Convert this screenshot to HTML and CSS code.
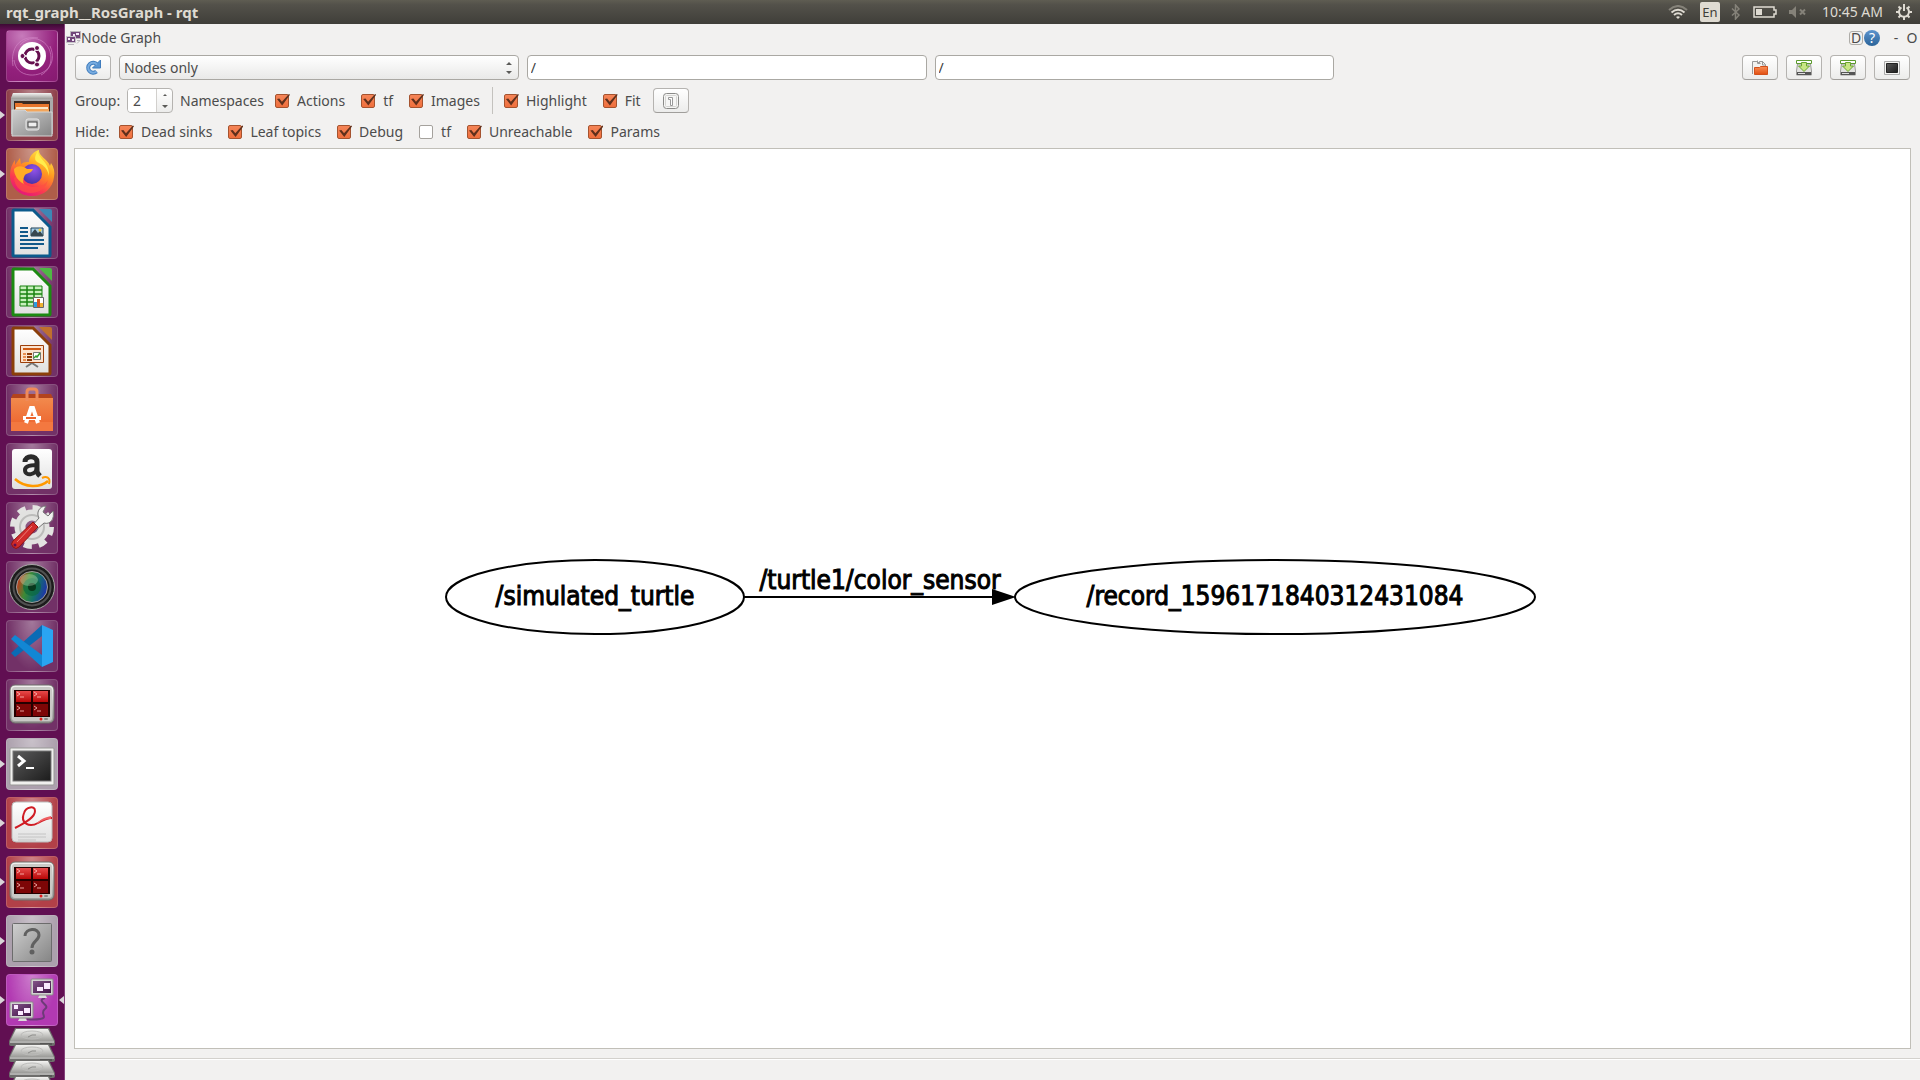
FILE: index.html
```html
<!DOCTYPE html>
<html lang="en">
<head>
<meta charset="utf-8">
<title>rqt_graph__RosGraph - rqt</title>
<link rel="stylesheet" href="styles.css">
</head>
<body>
<svg class="defs" aria-hidden="true">
  <defs>
    <linearGradient id="metal" x1="0" y1="0" x2="0" y2="1"><stop offset="0" stop-color="#f4f4f2"/><stop offset="1" stop-color="#9b9b98"/></linearGradient>
    <linearGradient id="grey" x1="0" y1="0" x2="1" y2="1"><stop offset="0" stop-color="#cfcfcf"/><stop offset="1" stop-color="#858585"/></linearGradient>
    <linearGradient id="paper" x1="0" y1="0" x2="0" y2="1"><stop offset="0" stop-color="#ffffff"/><stop offset="1" stop-color="#e0e0e0"/></linearGradient>
    <linearGradient id="fire" x1="0.8" y1="0" x2="0.3" y2="1"><stop offset="0" stop-color="#fff04a"/><stop offset="0.4" stop-color="#ff9a1f"/><stop offset="0.75" stop-color="#fb3a50"/><stop offset="1" stop-color="#e3157c"/></linearGradient>
    <radialGradient id="globe" cx="0.6" cy="0.3" r="0.8"><stop offset="0" stop-color="#9152e8"/><stop offset="1" stop-color="#3e2fa0"/></radialGradient>
    <linearGradient id="bag" x1="0" y1="0" x2="0" y2="1"><stop offset="0" stop-color="#f28a4d"/><stop offset="1" stop-color="#ec5f2a"/></linearGradient>
    <linearGradient id="dark" x1="0" y1="0" x2="1" y2="1"><stop offset="0" stop-color="#5b5b5b"/><stop offset="1" stop-color="#1c1c1c"/></linearGradient>
    <linearGradient id="redpane" x1="0" y1="0" x2="0" y2="1"><stop offset="0" stop-color="#e84a4a"/><stop offset="1" stop-color="#b80707"/></linearGradient>
    <linearGradient id="lens" x1="0" y1="0.3" x2="1" y2="0.6"><stop offset="0" stop-color="#d2321c"/><stop offset="0.35" stop-color="#3c8a35"/><stop offset="0.65" stop-color="#14706a"/><stop offset="1" stop-color="#1f2fb0"/></linearGradient>
    <linearGradient id="purplepane" x1="0" y1="0" x2="1" y2="1"><stop offset="0" stop-color="#84558a"/><stop offset="1" stop-color="#3f1245"/></linearGradient>
    <linearGradient id="orange" x1="0" y1="0" x2="0" y2="1"><stop offset="0" stop-color="#f99058"/><stop offset="1" stop-color="#e14e10"/></linearGradient>
    <symbol id="grid-term" viewBox="0 0 52 52">
      <rect x="4" y="6" width="44" height="38" rx="5" fill="url(#metal)" stroke="#6d6d69"/>
      <rect x="6" y="8" width="40" height="34" rx="3" fill="#c9c9c5"/>
      <rect x="8" y="11" width="36" height="27" fill="#240000"/>
      <path fill="url(#redpane)" d="M10 12h15v11H10zM27 12h15v11H27z"/>
      <path fill="#7d0606" d="M10 25h15v12H10zM27 25h15v12H27z"/>
      <path fill="none" stroke="#ffc4bf" stroke-opacity=".8" d="M11 13l3 2-3 2M14 18h4M28 13l3 2-3 2M31 18h4M11 27l3 2-3 2M14 32h4M28 27l3 2-3 2M31 32h4"/>
      <circle cx="35" cy="40" r="1.500" fill="#e31b1b"/><rect x="38" y="39" width="4" height="2" rx="1" fill="#898985"/>
    </symbol>
    <symbol id="disk" viewBox="0 0 46 18">
      <path d="M6 0h34l6 13v3q0 2-2 2H2q-2 0-2-2v-3z" fill="#6e6e6c"/>
      <path d="M7 1h32l6 12H1z" fill="url(#metal)"/>
      <ellipse cx="23" cy="7" rx="11" ry="4" fill="none" stroke="#bcbcba"/>
      <path d="M19 9l4-2h4" fill="none" stroke="#8c8c8a"/>
      <path d="M1 14h44" stroke="#f1f1ef"/><path d="M31 16h12" stroke="#3d3d3c"/>
    </symbol>
    <symbol id="save" viewBox="0 0 16 16">
      <path d="M1.500 4h13l1 7v4H.5v-4z" fill="#e2e2e0" stroke="#9b9b99"/>
      <path d="M1 12h14v3H1z" fill="#555"/><path d="M2 13.500h7" stroke="#ddd"/>
      <path d="M.5.500h15v3H.5z" fill="#fff" stroke="#5b9a2d"/>
      <path d="M5.500 2.500h5V6h3L8 11.500 2.500 6h3z" fill="#c8e684" stroke="#6aa52e"/>
    </symbol>
    <symbol id="screens" viewBox="0 0 52 52">
      <path d="M39 24c-10 3 6 7 0 11s4 9-5 10q-6 1-13-0" fill="none" stroke="#6d3a78" stroke-width="2"/>
      <path d="M32 24l2-4h5l2 4zM12 47l2-4h5l2 4z" fill="#dcdcda"/>
      <rect x="25" y="5" width="22" height="16" rx="1" fill="#d2d2d0" stroke="#8b8b89"/><rect x="27" y="7" width="18" height="12" fill="url(#purplepane)"/>
      <rect x="4" y="28" width="23" height="16" rx="1" fill="#d2d2d0" stroke="#8b8b89"/><rect x="6" y="30" width="19" height="12" fill="url(#purplepane)"/>
      <path d="M31 13h6v4h-6zM38 9h6v6h-6zM8 31h4v4H8zM12 37h5v4h-5zM18 34h6v5h-6z" fill="#fbeaff"/>
    </symbol>
  </defs>
</svg>

<header class="panel">
  <h1 class="panel-title">rqt_graph__RosGraph - rqt</h1>
  <div class="indicators">
    <svg class="ind-wifi" viewBox="0 0 20 14" aria-hidden="true"><g fill="none" stroke-width="2"><path d="M1 5Q10-3 19 5" stroke="#858279"/><path d="M3.500 7.500Q10 2 16.500 7.500M6 10q4-3.500 8 0" stroke="#dfdbd2"/></g><path d="M8 12q2-1.500 4 0l-2 2z" fill="#dfdbd2"/></svg>
    <span class="keyboard">En</span>
    <svg class="ind-bt" viewBox="0 0 10 16" aria-hidden="true"><path d="M1 4.500l7 6.500-3.500 4V1L8 5l-7 6.500" fill="none" stroke="#858279" stroke-width="1.500"/></svg>
    <svg class="ind-battery" viewBox="0 0 24 12" aria-hidden="true"><path d="M1 1h20v3h2v4h-2v3H1z" fill="none" stroke="#dfdbd2" stroke-width="1.500"/><path d="M3 3h6v6H3z" fill="#dfdbd2"/></svg>
    <svg class="ind-volume" viewBox="0 0 18 12" aria-hidden="true"><path d="M0 4h3l4-4v12L3 8H0z" fill="#858279"/><path d="M11 3.500l5 5m0-5l-5 5" stroke="#858279" stroke-width="2"/></svg>
    <time class="clock">10:45 AM</time>
    <svg class="ind-gear" viewBox="0 0 16 16" aria-hidden="true"><path d="M8 0v7" stroke="#dfdbd2" stroke-width="2"/><path d="M5.500 3.500a5 5 0 1 0 5 0" fill="none" stroke="#dfdbd2" stroke-width="2"/><path d="M2.500 2.500l2 2M13.500 2.500l-2 2M0 8h3M13 8h3M2.500 13.500l2-2M13.500 13.500l-2-2M8 13v3" stroke="#dfdbd2" stroke-width="2"/></svg>
  </div>
</header>

<div class="desktop">
  <nav class="launcher" aria-label="Launcher">
    <button class="tile tile-dash" aria-label="Dash"><svg viewBox="0 0 52 52"><g fill="none" stroke="#d58bc9" stroke-opacity=".6"><path d="M7 36C4 18 14 5 32 8"/><path d="M14 15C25 2 45 10 45 28c0 8-4 14-10 17"/><path d="M44 16c8 18-5 30-20 29C14 44 9 38 8 30"/></g><circle cx="26" cy="26" r="14" fill="#fff"/><circle cx="26" cy="26" r="7" fill="none" stroke="#66104f" stroke-width="3"/><path d="M26 26h-9M26 26l5-9M26 26l5 9" stroke="#fff" stroke-width="1.500"/><circle cx="26" cy="26" r="5" fill="#fff"/><g fill="#66104f" stroke="#fff"><circle cx="16.500" cy="26" r="2.500"/><circle cx="31" cy="18" r="2.500"/><circle cx="31" cy="34.500" r="2.500"/></g></svg></button>
    <button class="tile tile-red running" aria-label="Files"><svg viewBox="0 0 52 52"><path d="M7 4h38l2 5v36H5V9z" fill="#aaa"/><path d="M7 4h38l2 6H5z" fill="url(#metal)"/><path d="M8 12h36v12H8z" fill="#3b2b23"/><path d="M9 16V14h7l1 1h26v7H9z" fill="#e8762d"/><path d="M10 18h32v5H10z" fill="#fbe7c8"/><path d="M9 20h34v4H9z" fill="#f3a55a"/><path d="M6 21h13l2 2h25v24H6z" fill="url(#grey)" stroke="#d5d5d5"/><rect x="20" y="30" width="13" height="11" rx="2" fill="#b9b9b9" stroke="#e8e8e8"/><rect x="22" y="33" width="9" height="5" fill="#eee" stroke="#444"/></svg></button>
    <button class="tile tile-orange running" aria-label="Firefox"><svg viewBox="0 0 52 52"><path d="M26 48C13 48 4 39 4 27c0-6 2-11 5-15v5l5-7 1 6c3-2 5-2 8-2 0-6 5-11 10-12-1 6 9 9 11 16l1-3c3 4 4 9 3 14-1 11-10 19-22 19z" fill="url(#fire)"/><path d="M8 30c1 10 8 15 17 15 8 0 15-5 17-13-3 5-8 7-13 7C18 39 13 32 15 25z" fill="#ff4e43" opacity=".7"/><circle cx="26" cy="26" r="10" fill="url(#globe)"/><path d="M8 21c4-4 9-3 13 0l6 0c-1 4-6 4-8 6-1 2-3 6-1 9-6-3-10-9-10-15z" fill="#ffac25"/><path d="M32 3c0 8 12 11 11 25-1-6-5-11-10-13-6-2-4-8-1-12z" fill="#ffed4c"/></svg></button>
    <button class="tile" aria-label="Writer"><svg viewBox="0 0 52 52"><path d="M8 3h19l17 17v28q0 1-1 1H8q-1 0-1-1V4q0-1 1-1z" fill="url(#paper)" stroke="#0c5a8c" stroke-width="3"/><path d="M33 2h11q2 0 2 2v11z" fill="#3d87b5"/><path d="M14 21h8M14 25h8M14 29h8M14 33h24M14 37h24M14 41h18" stroke="#12598a" stroke-width="2"/><path d="M25 21h12v8H25z" fill="#a7cfe8" stroke="#1c4057"/><path d="M25 29v-2l4-5 3 4 2-2 3 4v1z" fill="#37474f"/><circle cx="34" cy="23" r="1.500" fill="#f7cf3c"/></svg></button>
    <button class="tile" aria-label="Calc"><svg viewBox="0 0 52 52"><path d="M8 3h19l17 17v28q0 1-1 1H8q-1 0-1-1V4q0-1 1-1z" fill="url(#paper)" stroke="#1c8a12" stroke-width="3"/><path d="M33 2h11q2 0 2 2v11z" fill="#4fb944"/><path d="M14 20h22v20H14z" fill="#c8f0bd" stroke="#198211"/><path d="M14 24h22M14 28h22M14 32h22M14 36h22M21 20v20M28 20v20" stroke="#198211" stroke-width="1.500"/><path d="M27.500 31.500h10v10h-10z" fill="#fff" stroke="#666"/><path d="M28 36h3v5h-3z" fill="#2d9be0"/><path d="M31 33h3v8h-3z" fill="#d7571f"/><path d="M34 37h3v4h-3z" fill="#edb332"/></svg></button>
    <button class="tile" aria-label="Impress"><svg viewBox="0 0 52 52"><path d="M8 3h19l17 17v28q0 1-1 1H8q-1 0-1-1V4q0-1 1-1z" fill="url(#paper)" stroke="#8b3f0a" stroke-width="3"/><path d="M33 2h11q2 0 2 2v11z" fill="#c0702e"/><path d="M20 42l6-4 6 4M26 36v3" fill="none" stroke="#777" stroke-width="2"/><path d="M14.500 20.500h23v17h-23z" fill="#fbe3cf" stroke="#9c3f0c"/><path d="M17 24h18" stroke="#cf5a14" stroke-width="2"/><path d="M17 29h3M17 32h3M17 35h3" stroke="#e88e51" stroke-width="2"/><path d="M21 29h5M21 32h5M21 35h5" stroke="#8d3a0a" stroke-width="2"/><path d="M27.500 27.500h7v7h-7z" fill="#fff" stroke="#777"/><path d="M28 33l2-2 1 1 3-4" stroke="#34a02c" stroke-width="1.500" fill="none"/></svg></button>
    <button class="tile" aria-label="Software"><svg viewBox="0 0 52 52"><path d="M7 10h38l2 4H5z" fill="#b3431d"/><path d="M5 14h42v33H5z" fill="url(#bag)"/><path d="M5 38h42v9H5z" fill="#f37840"/><path d="M21 17V8q0-3 3-3h4q3 0 3 3v9" fill="none" stroke="#ef8a5a" stroke-width="3"/><path d="M20 39l5-15h2l5 15" fill="none" stroke="#fff" stroke-width="4"/><path d="M17 34h18" stroke="#fff" stroke-width="4"/><path d="M20 34h10" stroke="#ec632d" stroke-width="2"/></svg></button>
    <button class="tile" aria-label="Amazon"><svg viewBox="0 0 52 52"><rect x="6" y="6" width="40" height="40" rx="3" fill="url(#paper)"/><path d="M19 19c0-7 12-7 12 0v9c0 2 1 3 3 5" fill="none" stroke="#2b2b2b" stroke-width="5"/><path d="M31 22c-7 0-12 1-12 5 0 7 12 5 12-3" fill="none" stroke="#2b2b2b" stroke-width="4"/><path d="M9 36c10 9 25 9 33 2" fill="none" stroke="#f90" stroke-width="2.500"/><path d="M36 35c4-2 9-1 7 6" fill="none" stroke="#f90" stroke-width="2"/></svg></button>
    <button class="tile" aria-label="System Settings"><svg viewBox="0 0 52 52"><circle cx="26" cy="25" r="19" fill="none" stroke="#e3e3e1" stroke-width="6" stroke-dasharray="8 6.920"/><circle cx="26" cy="25" r="12" fill="none" stroke="#e2e2e0" stroke-width="11"/><circle cx="26" cy="25" r="12" fill="none" stroke="#bcbcba" stroke-width="2"/><path d="M47 9l-5 5-5-4 3-6c-7 0-10 7-7 12l-7 8 4 4 8-7c6 2 11-4 9-12z" fill="#f1f1ef" stroke="#777"/><path d="M27 20l5 5-19 20q-3 3-6 0-3-3 0-6z" fill="#d12a2a" stroke="#8d1414"/><path d="M26 24L11 40" stroke="#ee8079"/><circle cx="9" cy="43" r="1.500" fill="#5f0f51"/></svg></button>
    <button class="tile" aria-label="Camera"><svg viewBox="0 0 52 52"><circle cx="26" cy="26" r="22.500" fill="#1c1c1c" stroke="#a8a8a6"/><circle cx="26" cy="26" r="18.500" fill="none" stroke="#515151" stroke-width="2"/><circle cx="26" cy="26" r="15.500" fill="url(#lens)" stroke="#9c9c9a"/><circle cx="26" cy="26" r="9" fill="#0c6a3f" opacity=".7"/><circle cx="26" cy="26" r="4" fill="#08391d"/><ellipse cx="23" cy="19" rx="9" ry="6" fill="#e9ffd9" opacity=".3"/></svg></button>
    <button class="tile" aria-label="Code"><svg viewBox="0 0 52 52"><path d="M5 33l4 4L36 16V5z" fill="#0a6bb5"/><path d="M5 19l4-4 27 20v12z" fill="#1287d4"/><path d="M36 5l11 5v32l-11 5z" fill="#2aa4f2"/></svg></button>
    <button class="tile" aria-label="Terminator"><svg><use href="#grid-term"/></svg></button>
    <button class="tile tile-pale running" aria-label="Terminal"><svg viewBox="0 0 52 52"><rect x="4" y="10" width="44" height="37" rx="1" fill="#f0f0ee" stroke="#989896"/><rect x="7" y="13" width="38" height="30" fill="url(#dark)" stroke="#777"/><path d="M12 18l6 5-6 5" fill="none" stroke="#fff" stroke-width="3"/><path d="M20 30h8" stroke="#fff" stroke-width="2"/></svg></button>
    <button class="tile tile-crimson running" aria-label="Document Viewer"><svg viewBox="0 0 52 52"><rect x="6" y="5" width="40" height="40" rx="4" fill="url(#paper)" stroke="#bbb"/><path d="M9 31c12-6 20-11 20-17 0-6-9-4-11 2-4 10 5 15 14 10 5-3 9-5 14-5" fill="none" stroke="#d01c24" stroke-width="2"/><path d="M31 27c5-4 10-5 14-5v-3c-8 2-12 4-14 8z" fill="#ef6064"/><path d="M12 37h28M12 40h28M12 43h18" stroke="#c4c4c4"/></svg></button>
    <button class="tile tile-crimson running" aria-label="Terminator"><svg><use href="#grid-term"/></svg></button>
    <button class="tile tile-pale running" aria-label="Unknown application"><svg viewBox="0 0 52 52"><rect x="6.500" y="8.500" width="39" height="38" rx="1" fill="url(#grey)" stroke="#6c6c6c"/><path d="M19 21c0-8 14-9 14-1 0 6-7 6-7 13" fill="none" stroke="#606060" stroke-width="3"/><circle cx="26" cy="37" r="2.500" fill="#606060"/></svg></button>
    <button class="tile tile-violet running focused" aria-label="rqt"><svg><use href="#screens"/></svg></button>
    <div class="folded">
      <svg><use href="#disk"/></svg><svg><use href="#disk"/></svg><svg><use href="#disk"/></svg><svg><use href="#disk"/></svg>
    </div>
  </nav>

  <main class="window">
    <div class="dock-title">
      <svg class="dock-icon" viewBox="0 0 16 16" aria-hidden="true"><path d="M5.500 1.500h10v7h-10z" fill="#70457a" stroke="#b9b5bb"/><path d="M1.500 6.500h9v6h-9z" fill="#70457a" stroke="#c6c2c8"/><path d="M3 14.500h6M12 10.500h3l-3 3" fill="none" stroke="#b9b5bb"/><path d="M8 4h2v2H8zM11 3h3v2h-3zM3 8h2v2H3zM7 9h2v2H7z" fill="#f3e6f6"/></svg>
      <h2 class="dock-name">Node Graph</h2>
      <div class="dock-buttons">
        <button class="dock-d">D</button>
        <button class="dock-help" aria-label="Help">?</button>
        <button class="dock-flat dock-min">-</button>
        <button class="dock-flat">O</button>
      </div>
    </div>

    <div class="controls">
      <div class="row row-main">
        <button class="tool" aria-label="Refresh"><svg viewBox="0 0 16 16"><path d="M11.500 11.500A5 5 0 1 1 12 4.500" fill="none" stroke="#3f7cbd" stroke-width="4"/><path d="M15.500 0v8h-8z" fill="#5a95d2" stroke="#3f7cbd"/><path d="M11.500 11.500A5 5 0 1 1 12 4.500" fill="none" stroke="#78ace0" stroke-width="2"/></svg></button>
        <div class="combo">
          <select aria-label="Graph type"><option>Nodes only</option></select>
          <svg viewBox="0 0 6 12" aria-hidden="true"><path d="M3 0l3 3H0zM3 12l3-3H0z" fill="#5a5a58"/></svg>
        </div>
        <input class="filter" type="text" value="/" aria-label="Node filter">
        <input class="filter" type="text" value="/" aria-label="Topic filter">
        <div class="spacer"></div>
        <button class="tool" aria-label="Open"><svg viewBox="0 0 16 16"><path d="M.5 14V1.500h5l2 2V1.500h3l3 3V7" fill="#f2f2f0" stroke="#999"/><path d="M5.500.500v3h3M10.500 1v4h3" fill="none" stroke="#999"/><path d="M2.500 7.500h5l1-1h7v8h-13z" fill="url(#orange)" stroke="#d2501b"/></svg></button>
        <button class="tool" aria-label="Save as DOT"><svg><use href="#save"/></svg></button>
        <button class="tool" aria-label="Save as SVG"><svg><use href="#save"/></svg></button>
        <button class="tool" aria-label="Save as image"><svg viewBox="0 0 16 16"><path d="M.5 1.500h15v13H.5z" fill="#f4f4f2" stroke="#aaa"/><path d="M2.500 3.500h11v9h-11z" fill="url(#dark)" stroke="#222"/></svg></button>
      </div>

      <div class="row row-group">
        <label class="caption" for="depth">Group:</label>
        <div class="spin">
          <input id="depth" type="text" inputmode="numeric" value="2">
          <svg viewBox="0 0 6 16" aria-hidden="true"><path d="M3 1l2 2H1zM3 15l3-3H0z" fill="#5a5a58"/></svg>
        </div>
        <span class="namespaces">Namespaces</span>
        <label class="check"><input type="checkbox" checked>Actions</label>
        <label class="check"><input type="checkbox" checked>tf</label>
        <label class="check"><input type="checkbox" checked>Images</label>
        <span class="divider"></span>
        <label class="check"><input type="checkbox" checked>Highlight</label>
        <label class="check"><input type="checkbox" checked>Fit</label>
        <button class="tool tool-fit" aria-label="Fit in view"><svg viewBox="0 0 16 16"><rect x=".5" y=".5" width="15" height="15" rx="3" fill="#f6f6f5" stroke="#8a8a88"/><rect x="2.500" y="2.500" width="11" height="11" rx="1" fill="none" stroke="#d5d5d3"/><path d="M5.500 6.500v-2h4v8h-2v-6z" fill="#fff" stroke="#999"/></svg></button>
      </div>

      <div class="row row-hide">
        <span class="caption caption-hide">Hide:</span>
        <label class="check"><input type="checkbox" checked>Dead sinks</label>
        <label class="check"><input type="checkbox" checked>Leaf topics</label>
        <label class="check"><input type="checkbox" checked>Debug</label>
        <label class="check"><input type="checkbox">tf</label>
        <label class="check"><input type="checkbox" checked>Unreachable</label>
        <label class="check"><input type="checkbox" checked>Params</label>
      </div>
    </div>

    <section class="canvas" aria-label="Graph">
      <svg class="graph" viewBox="0 0 1835 899">
        <g fill="none" stroke="#000" stroke-width="2">
          <ellipse cx="520" cy="448" rx="149" ry="37"/>
          <ellipse cx="1200" cy="448" rx="260" ry="37"/>
          <path d="M669 448h248"/>
        </g>
        <path d="M917 440l24 8-24 8z"/>
        <g class="graph-text">
          <text x="520" y="456">/simulated_turtle</text>
          <text x="805" y="440">/turtle1/color_sensor</text>
          <text x="1200" y="456">/record_1596171840312431084</text>
        </g>
      </svg>
    </section>
    <footer class="status"></footer>
  </main>
</div>
</body>
</html>
```

FILE: styles.css
```css
* {
  box-sizing: border-box;
}

body {
  margin: 0;
  height: 100vh;
  display: flex;
  flex-direction: column;
  overflow: hidden;
  background: #f2f1f0;
  color: #4c4c4c;
  font: 14px/20px "Noto Sans", "Open Sans", sans-serif;
}

button,
input,
select {
  font: inherit;
  color: inherit;
  margin: 0;
}

svg {
  display: block;
}

.defs {
  position: absolute;
  width: 0;
  height: 0;
}

/* Top panel */
.panel {
  flex: none;
  height: 24px;
  display: flex;
  align-items: center;
  justify-content: space-between;
  padding: 0 8px 0 6px;
  background: linear-gradient(#5f5d52, #53514a 20%, #3f3e39);
  color: #dfdbd2;
}

.panel-title {
  margin: 0;
  font-size: 15px;
  line-height: 24px;
  font-weight: 700;
}

.indicators {
  display: flex;
  align-items: center;
}

.ind-wifi {
  width: 20px;
  height: 14px;
  margin-right: 12px;
}

.keyboard {
  width: 20px;
  height: 20px;
  margin-right: 11px;
  border-radius: 2px;
  background: #dfdbd2;
  color: #3f3e39;
  font-size: 13px;
  text-align: center;
}

.ind-bt {
  width: 10px;
  height: 16px;
  margin-right: 12px;
}

.ind-battery {
  width: 24px;
  height: 12px;
  margin-right: 12px;
}

.ind-volume {
  width: 18px;
  height: 12px;
  margin-right: 15px;
}

.clock {
  margin-right: 13px;
}

.ind-gear {
  width: 16px;
  height: 16px;
}

.desktop {
  flex: 1;
  min-height: 0;
  display: flex;
}

/* Launcher */
.launcher {
  flex: none;
  width: 65px;
  display: flex;
  flex-direction: column;
  gap: 7px;
  padding: 6px 6px 0;
  overflow: hidden;
  background: linear-gradient(#3d0a34, #610f52 6px);
  border-right: 1px solid #84417a;
}

.tile {
  flex: none;
  position: relative;
  width: 52px;
  height: 52px;
  padding: 0;
  border: 1px solid rgba(255, 255, 255, 0.16);
  border-radius: 4px;
  background: radial-gradient(ellipse at 50% 0, rgba(255, 255, 255, 0.4), rgba(255, 255, 255, 0.08) 70%) #66205a;
}

.tile svg {
  width: 52px;
  height: 52px;
  margin: -1px;
}

.tile-dash {
  background: radial-gradient(circle at 30% 10%, #c77bbb, #93207c 60%, #861a70);
}

.tile-red {
  background-color: #85303b;
}

.tile-orange {
  background-color: #a8503a;
}

.tile-pale {
  background-color: #a598a6;
}

.tile-crimson {
  background-color: #ab3038;
}

.tile-violet {
  background-color: #ab28ab;
}

.running::before,
.focused::after {
  content: "";
  position: absolute;
  top: 21px;
  width: 5px;
  height: 8px;
  background: #d9d5d8;
}

.running::before {
  left: -7px;
  clip-path: polygon(0 0, 100% 50%, 0 100%);
}

.focused::after {
  right: -7px;
  clip-path: polygon(100% 0, 0 50%, 100% 100%);
}

.folded {
  flex: none;
  display: flex;
  flex-direction: column;
  align-items: center;
  margin-top: -5px;
}

.folded svg {
  width: 46px;
  height: 18px;
  margin-bottom: -2px;
}

/* Application window */
.window {
  flex: 1;
  min-width: 0;
  display: flex;
  flex-direction: column;
}

.dock-title {
  flex: none;
  height: 27px;
  display: flex;
  align-items: center;
}

.dock-icon {
  width: 16px;
  height: 16px;
}

.dock-name {
  margin: 0;
  flex: 1;
  font-size: 14px;
  font-weight: 400;
}

.dock-buttons {
  display: flex;
  align-items: center;
  padding-right: 2px;
}

.dock-buttons button {
  padding: 0;
  border: 0;
  background: none;
  line-height: 14px;
}

.dock-buttons .dock-d {
  width: 14px;
  height: 14px;
  margin-right: 1px;
  border: 1px solid #aeaca8;
  border-radius: 3px;
  line-height: 12px;
}

.dock-buttons .dock-help {
  width: 16px;
  height: 16px;
  margin-right: 10px;
  border-radius: 50%;
  background: linear-gradient(#5d94ce, #2a6399);
  color: #fff;
}

.dock-buttons .dock-flat {
  width: 12px;
}

.dock-buttons .dock-min {
  margin-right: 4px;
}

.controls {
  flex: none;
  padding: 4px 10px 0;
}

.row {
  display: flex;
  align-items: center;
}

.row-main {
  gap: 8px;
  height: 25px;
}

.tool {
  flex: none;
  width: 36px;
  height: 25px;
  display: flex;
  align-items: center;
  justify-content: center;
  padding: 0;
  border: 1px solid #b5b3b0;
  border-bottom-color: #a09e9b;
  border-radius: 4px;
  background: linear-gradient(#fff, #ececeb);
}

.tool svg {
  width: 16px;
  height: 16px;
}

.combo,
.filter {
  flex: 1;
  min-width: 0;
  height: 25px;
  border: 1px solid #aaa8a3;
  border-radius: 4px;
}

.combo {
  display: flex;
  align-items: center;
  padding-right: 6px;
  background: linear-gradient(#fff, #e9e9e8);
}

.combo select {
  flex: 1;
  height: 23px;
  padding: 0 4px;
  appearance: none;
  border: 0;
  background: none;
}

.combo svg {
  width: 6px;
  height: 12px;
}

.filter {
  padding: 0 3px;
  background: #fff;
  color: #3c3c3c;
}

.spacer {
  flex: 1;
}

.row-group {
  height: 25px;
  margin-top: 8px;
}

.row-hide {
  height: 20px;
  margin: 9px 0 6px;
}

.caption {
  width: 52px;
}

.caption-hide {
  width: 44px;
}

.spin {
  width: 46px;
  height: 25px;
  display: flex;
  align-items: center;
  border: 1px solid #b5b3b0;
  border-radius: 4px;
  background: linear-gradient(#fff, #ececeb);
}

.spin input {
  width: 29px;
  height: 23px;
  margin-right: 5px;
  padding: 0 5px;
  border: 0;
  border-right: 1px solid #d2d0cd;
  border-radius: 3px 0 0 3px;
  background: #fff;
}

.spin svg {
  width: 6px;
  height: 16px;
}

.namespaces {
  margin: 0 11px 0 7px;
}

.check {
  display: flex;
  align-items: center;
  margin-right: 16px;
}

.check input {
  position: relative;
  width: 14px;
  height: 14px;
  margin-right: 8px;
  appearance: none;
  border: 1px solid #a5a29d;
  border-radius: 2px;
  background: #fff;
}

.check input:checked {
  border-color: #a5532f;
  background: linear-gradient(#f58558, #ef6f3d);
}

.check input:checked::before {
  content: "";
  position: absolute;
  inset: -1px -2px 1px 1px;
  background: #60301c;
  clip-path: polygon(0 45%, 18% 42%, 38% 68%, 92% 4%, 100% 10%, 40% 100%);
}

.divider {
  width: 1px;
  height: 27px;
  margin: 0 11px 0 -4px;
  background: #c4c2be;
}

.tool-fit {
  margin-left: -4px;
}

.canvas {
  flex: 1;
  min-height: 0;
  margin: 0 9px;
  border: 1px solid #c1bfb8;
  background: #fff;
}

.graph {
  width: 100%;
  height: 100%;
}

.graph-text {
  font-family: "DejaVu Sans Condensed", "DejaVu Sans", sans-serif;
  font-size: 26px;
  text-anchor: middle;
  stroke: #000;
  stroke-width: 1px;
}

.status {
  flex: none;
  height: 22px;
  margin-top: 9px;
  border-top: 1px solid #d3d1cd;
  box-shadow: inset 0 1px #fff;
}
```
